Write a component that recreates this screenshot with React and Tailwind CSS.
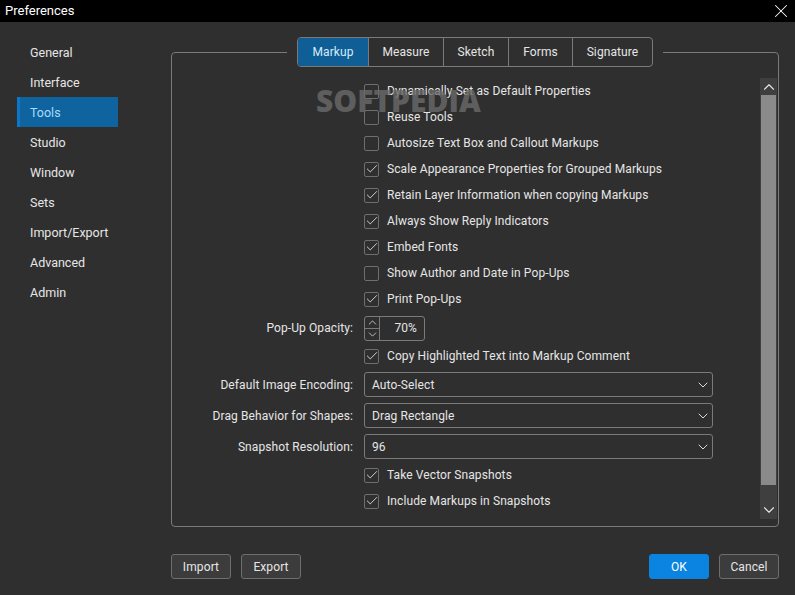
import { ChevronUp, ChevronDown, Check, X } from 'lucide-react';

const navItems = ['General', 'Interface', 'Tools', 'Studio', 'Window', 'Sets', 'Import/Export', 'Advanced', 'Admin'];
const tabs = [
  { name: 'Markup', w: 'w-[70px]' },
  { name: 'Measure', w: 'w-[75px]' },
  { name: 'Sketch', w: 'w-[65px]' },
  { name: 'Forms', w: 'w-[64px]' },
  { name: 'Signature', w: 'w-[80px]' },
];

function CheckRow({ label, checked }) {
  return (
    <div className="col-start-2 h-[26px] flex items-center">
      <span className="w-[15px] h-[15px] border border-[#6e6e6e] rounded-[2px] flex items-center justify-center text-[#f0f0f0]">
        {checked && <Check className="w-[14px] h-[14px] shrink-0" strokeWidth={1.4} />}
      </span>
      <span className="ml-[8px]">{label}</span>
    </div>
  );
}

function Label({ children, className = '' }) {
  return <div className={`col-start-1 text-right flex items-center justify-end pr-[1px] ${className}`}>{children}</div>;
}

function Select({ value }) {
  return (
    <div className="col-start-2 w-[349px] h-[25px] border border-[#7a7a7a] rounded-[3px] flex items-center justify-between pl-[7px] pr-[1px]">
      <span>{value}</span>
      <ChevronDown className="w-[16px] h-[16px] text-[#e8e8e8]" strokeWidth={1.4} />
    </div>
  );
}

function Btn({ children, className = '' }) {
  return (
    <button className={`w-[60px] h-[25px] rounded-[3px] border flex items-center justify-center ${className}`}>{children}</button>
  );
}

export default function App() {
  return (
    <div className="w-[795px] h-[595px] bg-[#2f2f2f] text-[#e6e6e6] text-[12px] tracking-[0.1px] font-['Roboto',sans-serif] flex flex-col overflow-hidden">
      <div className="h-[22px] bg-black flex items-center justify-between pl-[5px] pr-[3px] text-white text-[13px] tracking-normal">
        <span>Preferences</span>
        <X className="w-[22px] h-[22px]" strokeWidth={1.1} />
      </div>

      <div className="flex flex-1 pt-[15px]">
        <nav className="w-[171px] pl-[17px] shrink-0 text-[12.5px] tracking-normal">
          {navItems.map(item => (
            <div
              key={item}
              className={item === 'Tools'
                ? 'w-[101px] h-[30px] flex items-center pt-[2px] pl-[10px] bg-[#0f649f] border-l-[3px] border-[#0a78c8] text-[#a9dcfb]'
                : 'w-[101px] h-[30px] flex items-center pt-[2px] pl-[13px] text-[#e6e6e6]'}
            >
              {item}
            </div>
          ))}
        </nav>

        <div className="flex flex-col flex-1">
          <div className="relative mt-[15px] h-[475px] w-[608px] border border-[#7a7a7a] rounded-[4px] pt-[25px] pr-[1px]">
            {/* tabs sit over the group box border */}
            <div className="absolute top-[-16px] left-[115px] flex bg-[#2f2f2f] px-[10px]">
              <div className="flex h-[30px] border border-[#7a7a7a] rounded-[4px] overflow-hidden">
                {tabs.map((t, i) => (
                  <div
                    key={t.name}
                    className={`${t.w} flex items-center justify-center ${i > 0 ? 'border-l border-[#7a7a7a]' : ''} ${i === 0 ? 'bg-[#0f5e96] text-[#d5ecfb]' : ''}`}
                  >
                    {t.name}
                  </div>
                ))}
              </div>
            </div>

            {/* watermark */}
            <div className="absolute top-[30px] left-[144px] text-[30px] leading-[36px] font-extrabold font-['Open_Sans',sans-serif] tracking-normal text-[#6a6a6a] opacity-80 pointer-events-none">
              SOFTPEDIA
            </div>

            <div className="flex">
              <div className="grid grid-cols-[182px_1fr] gap-x-[10px] flex-1 content-start">
                <CheckRow label="Dynamically Set as Default Properties" />
                <CheckRow label="Reuse Tools" />
                <CheckRow label="Autosize Text Box and Callout Markups" />
                <CheckRow label="Scale Appearance Properties for Grouped Markups" checked />
                <CheckRow label="Retain Layer Information when copying Markups" checked />
                <CheckRow label="Always Show Reply Indicators" checked />
                <CheckRow label="Embed Fonts" checked />
                <CheckRow label="Show Author and Date in Pop-Ups" />
                <CheckRow label="Print Pop-Ups" checked />

                <Label className="h-[31px]">Pop-Up Opacity:</Label>
                <div className="col-start-2 h-[31px] flex items-center pt-[1px]">
                  <div className="w-[61px] h-[25px] border border-[#7a7a7a] rounded-[3px] flex">
                    <div className="w-[15px] border-r border-[#7a7a7a] flex flex-col">
                      <div className="h-[12px] flex items-center justify-center border-b border-[#7a7a7a]">
                        <ChevronUp className="w-[13px] h-[13px] shrink-0" strokeWidth={1.4} />
                      </div>
                      <div className="h-[11px] flex items-center justify-center">
                        <ChevronDown className="w-[13px] h-[13px] shrink-0" strokeWidth={1.4} />
                      </div>
                    </div>
                    <div className="flex-1 flex items-center justify-end pr-[7px]">70%</div>
                  </div>
                </div>
                <CheckRow label="Copy Highlighted Text into Markup Comment" checked />

                <div className="col-span-2 grid grid-cols-[182px_1fr] gap-x-[10px] gap-y-[6px] mt-[3px]">
                  <Label>Default Image Encoding:</Label>
                  <Select value="Auto-Select" />
                  <Label>Drag Behavior for Shapes:</Label>
                  <Select value="Drag Rectangle" />
                  <Label>Snapshot Resolution:</Label>
                  <Select value="96" />
                </div>

                <div className="col-start-2 h-[3px]" />
                <CheckRow label="Take Vector Snapshots" checked />
                <CheckRow label="Include Markups in Snapshots" checked />
              </div>

              <div className="w-[17px] h-[441px] bg-[#3f3f3f] flex flex-col shrink-0">
                <div className="h-[17px] flex items-center justify-center">
                  <ChevronUp className="w-[18px] h-[18px] shrink-0" strokeWidth={1.5} />
                </div>
                <div className="h-[390px] mx-[1px] bg-[#8a8a8a]" />
                <div className="flex-1 flex items-end justify-center">
                  <ChevronDown className="w-[18px] h-[18px] shrink-0" strokeWidth={1.5} />
                </div>
              </div>
            </div>
          </div>

          <div className="w-[608px] flex justify-between mt-[27px]">
            <div className="flex gap-[10px]">
              <Btn className="bg-[#3c3c3c] border-[#6e6e6e]">Import</Btn>
              <Btn className="bg-[#3c3c3c] border-[#6e6e6e]">Export</Btn>
            </div>
            <div className="flex gap-[10px]">
              <Btn className="bg-[#0a84e0] border-[#0a84e0] text-white">OK</Btn>
              <Btn className="bg-[#3c3c3c] border-[#6e6e6e]">Cancel</Btn>
            </div>
          </div>
        </div>
      </div>
    </div>
  );
}
